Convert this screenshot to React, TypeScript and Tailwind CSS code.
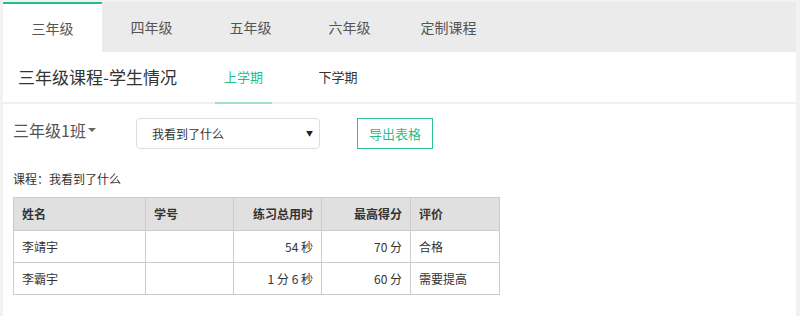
import React from 'react';

const grades = ['三年级', '四年级', '五年级', '六年级', '定制课程'];

const rows = [
  { name: '李靖宇', id: '', time: '54 秒', score: '70 分', comment: '合格' },
  { name: '李霸宇', id: '', time: '1 分 6 秒', score: '60 分', comment: '需要提高' },
];

export default function App() {
  return (
    <div
      className="w-[800px] h-[316px] bg-[#f2f2f2] pt-[2px] pl-[3px] pr-[4px] overflow-hidden"
      style={{ fontFamily: '"Noto Sans CJK SC", "Noto Sans", sans-serif' }}
    >
      <div className="bg-white h-full">
        {/* grade tabs */}
        <div className="flex h-[50px] bg-[#ebebeb]">
          {grades.map((g, i) => (
            <div
              key={g}
              className={
                i === 0
                  ? 'w-[99px] bg-white border-t-2 border-[#1fc08e] flex items-center justify-center text-[14px] text-[#555]'
                  : 'w-[99px] flex items-center justify-center text-[14px] text-[#555]'
              }
            >
              {g}
            </div>
          ))}
        </div>

        {/* header */}
        <div className="flex items-stretch h-[52px] border-b-2 border-[#f0f0f0] pl-[15px]">
          <div className="flex items-center text-[17px] text-[#333] w-[197px]">三年级课程-学生情况</div>
          <div className="w-[57px] flex items-center justify-center text-[13px] text-[#1fbf8c] border-b-2 border-[#9fe0c8] mb-[-2px]">
            上学期
          </div>
          <div className="w-[132px] flex items-center justify-center text-[13px] text-[#333]">下学期</div>
        </div>

        {/* filters */}
        <div className="flex items-center pl-[10px] pt-[14px]">
          <div className="w-[123px] text-[16px] text-[#555] flex items-center -mt-[7px]">
            三年级1班
            <span className="ml-[2px] inline-block border-x-[4px] border-x-transparent border-t-[4px] border-t-[#666]" />
          </div>
          <div className="w-[184px] h-[31px] border border-[#ddd] rounded-[4px] flex items-center justify-between pl-[15px] pr-[6px] text-[12px] text-[#333]">
            <span>我看到了什么</span>
            <span className="text-[7px] text-[#222]">▼</span>
          </div>
          <div className="ml-[37px] w-[76px] h-[31px] border border-[#2fc494] flex items-center justify-center text-[13px] text-[#1fbf8c]">
            导出表格
          </div>
        </div>

        <div className="pl-[10px] mt-[21px] text-[12px] text-[#333]">课程：我看到了什么</div>

        {/* table */}
        <table className="ml-[10px] mt-[9px] border-collapse text-[12px] text-[#333]">
          <thead>
            <tr className="bg-[#e0e0e0] h-[33px]">
              <th className="w-[132px] border border-[#ccc] px-[8px] text-left font-bold">姓名</th>
              <th className="w-[88px] border border-[#ccc] px-[8px] text-left font-bold">学号</th>
              <th className="w-[88px] border border-[#ccc] px-[8px] text-right font-bold">练习总用时</th>
              <th className="w-[89px] border border-[#ccc] px-[8px] text-right font-bold">最高得分</th>
              <th className="w-[89px] border border-[#ccc] px-[8px] text-left font-bold">评价</th>
            </tr>
          </thead>
          <tbody>
            {rows.map((r) => (
              <tr key={r.name} className="h-[32px]">
                <td className="border border-[#ccc] px-[8px]">{r.name}</td>
                <td className="border border-[#ccc] px-[8px]">{r.id}</td>
                <td className="border border-[#ccc] px-[8px] text-right">{r.time}</td>
                <td className="border border-[#ccc] px-[8px] text-right">{r.score}</td>
                <td className="border border-[#ccc] px-[8px]">{r.comment}</td>
              </tr>
            ))}
          </tbody>
        </table>
      </div>
    </div>
  );
}
